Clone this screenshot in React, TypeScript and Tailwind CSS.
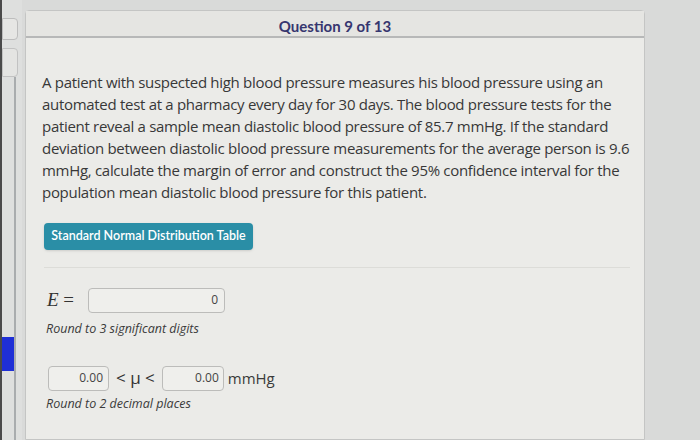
export default function App() {
  return (
    <div className="w-[700px] h-[440px] overflow-hidden bg-[#d9dad9] flex" style={{ fontFamily: '"Open Sans", sans-serif' }}>
      {/* left rail */}
      <div className="w-[22px] shrink-0 flex border-l-[2px] border-[#4a4a4a] bg-[#dedfde]">
        <div className="flex-1 flex flex-col pt-[18px]">
          <div className="h-[22px] w-[16px] border border-[#bdbdbd] bg-[#e6e6e4] rounded-r-sm" />
          <div className="mt-[8px] h-[29px] w-[16px] border border-[#c2c2c2] bg-[#e4e4e2] rounded-r-sm" />
          <div className="flex-1 flex">
            <div className="w-[12px] flex flex-col">
              <div className="h-[260px]" />
              <div className="h-[34px] bg-[#1f2fd6]" />
            </div>
            <div className="w-[2px] bg-[#a9acae]" />
          </div>
        </div>
      </div>

      {/* main panel */}
      <div className="ml-[3px] mt-[10px] w-[620px] flex flex-col bg-[#ebebe8] border border-[#c4c5c4] rounded-t-sm">
        <div className="h-[27px] shrink-0 flex items-center justify-center pt-[5px] bg-[#e5e5e2] border-b-2 border-[#b7b8b8]">
          <span className="text-[15px] font-bold text-[#36366f]" style={{ fontFamily: 'Lato, sans-serif' }}>
            Question 9 of 13
          </span>
        </div>

        <div className="pl-[16px] pr-[8px] pt-[33px]">
          <p className="w-[598px] text-[15px] leading-[22px] tracking-[-0.3px] text-[#383838]">
            A patient with suspected high blood pressure measures his blood pressure using an automated test at a pharmacy every day for 30 days. The blood pressure tests for the patient reveal a sample mean diastolic blood pressure of 85.7 mmHg. If the standard deviation between diastolic blood pressure measurements for the average person is 9.6 mmHg, calculate the margin of error and construct the 95% confidence interval for the population mean diastolic blood pressure for this patient.
          </p>

          <button
            className="mt-[20px] ml-[2px] h-[27px] w-[209px] rounded-sm bg-[#2a8ea6] text-white text-[12.5px] font-semibold shadow-sm"
            style={{ fontFamily: 'Lato, sans-serif' }}
          >
            Standard Normal Distribution Table
          </button>

          <div className="mt-[17px] ml-[2px] mr-[6px] border-t border-[#dcdcd8]" />

          <div className="mt-[18px] ml-[5px] flex items-center gap-[14px]">
            <span className="text-[19px] text-[#333]" style={{ fontFamily: '"Liberation Serif", serif' }}>
              <i>E</i> =
            </span>
            <div className="h-[25px] w-[137px] border border-[#bcbcba] rounded-sm bg-[#efefec] flex items-center justify-end pr-[6px] text-[12px] text-[#444]">
              0
            </div>
          </div>
          <div className="mt-[5px] ml-[4px] text-[12.5px] italic text-[#3a3a3a]">Round to 3 significant digits</div>

          <div className="mt-[27px] ml-[6px] flex items-center">
            <div className="h-[25px] w-[61px] border border-[#bcbcba] rounded-sm bg-[#efefec] flex items-center justify-end pr-[5px] text-[12px] text-[#444]">
              0.00
            </div>
            <span className="mx-[7px] text-[17px] text-[#333]">&lt; μ &lt;</span>
            <div className="h-[25px] w-[62px] border border-[#bcbcba] rounded-sm bg-[#efefec] flex items-center justify-end pr-[4px] text-[12px] text-[#444]">
              0.00
            </div>
            <span className="ml-[4px] text-[15px] text-[#3a3a3a]">mmHg</span>
          </div>
          <div className="mt-[4px] ml-[4px] text-[12.5px] italic text-[#3a3a3a]">Round to 2 decimal places</div>
        </div>
      </div>
    </div>
  );
}
